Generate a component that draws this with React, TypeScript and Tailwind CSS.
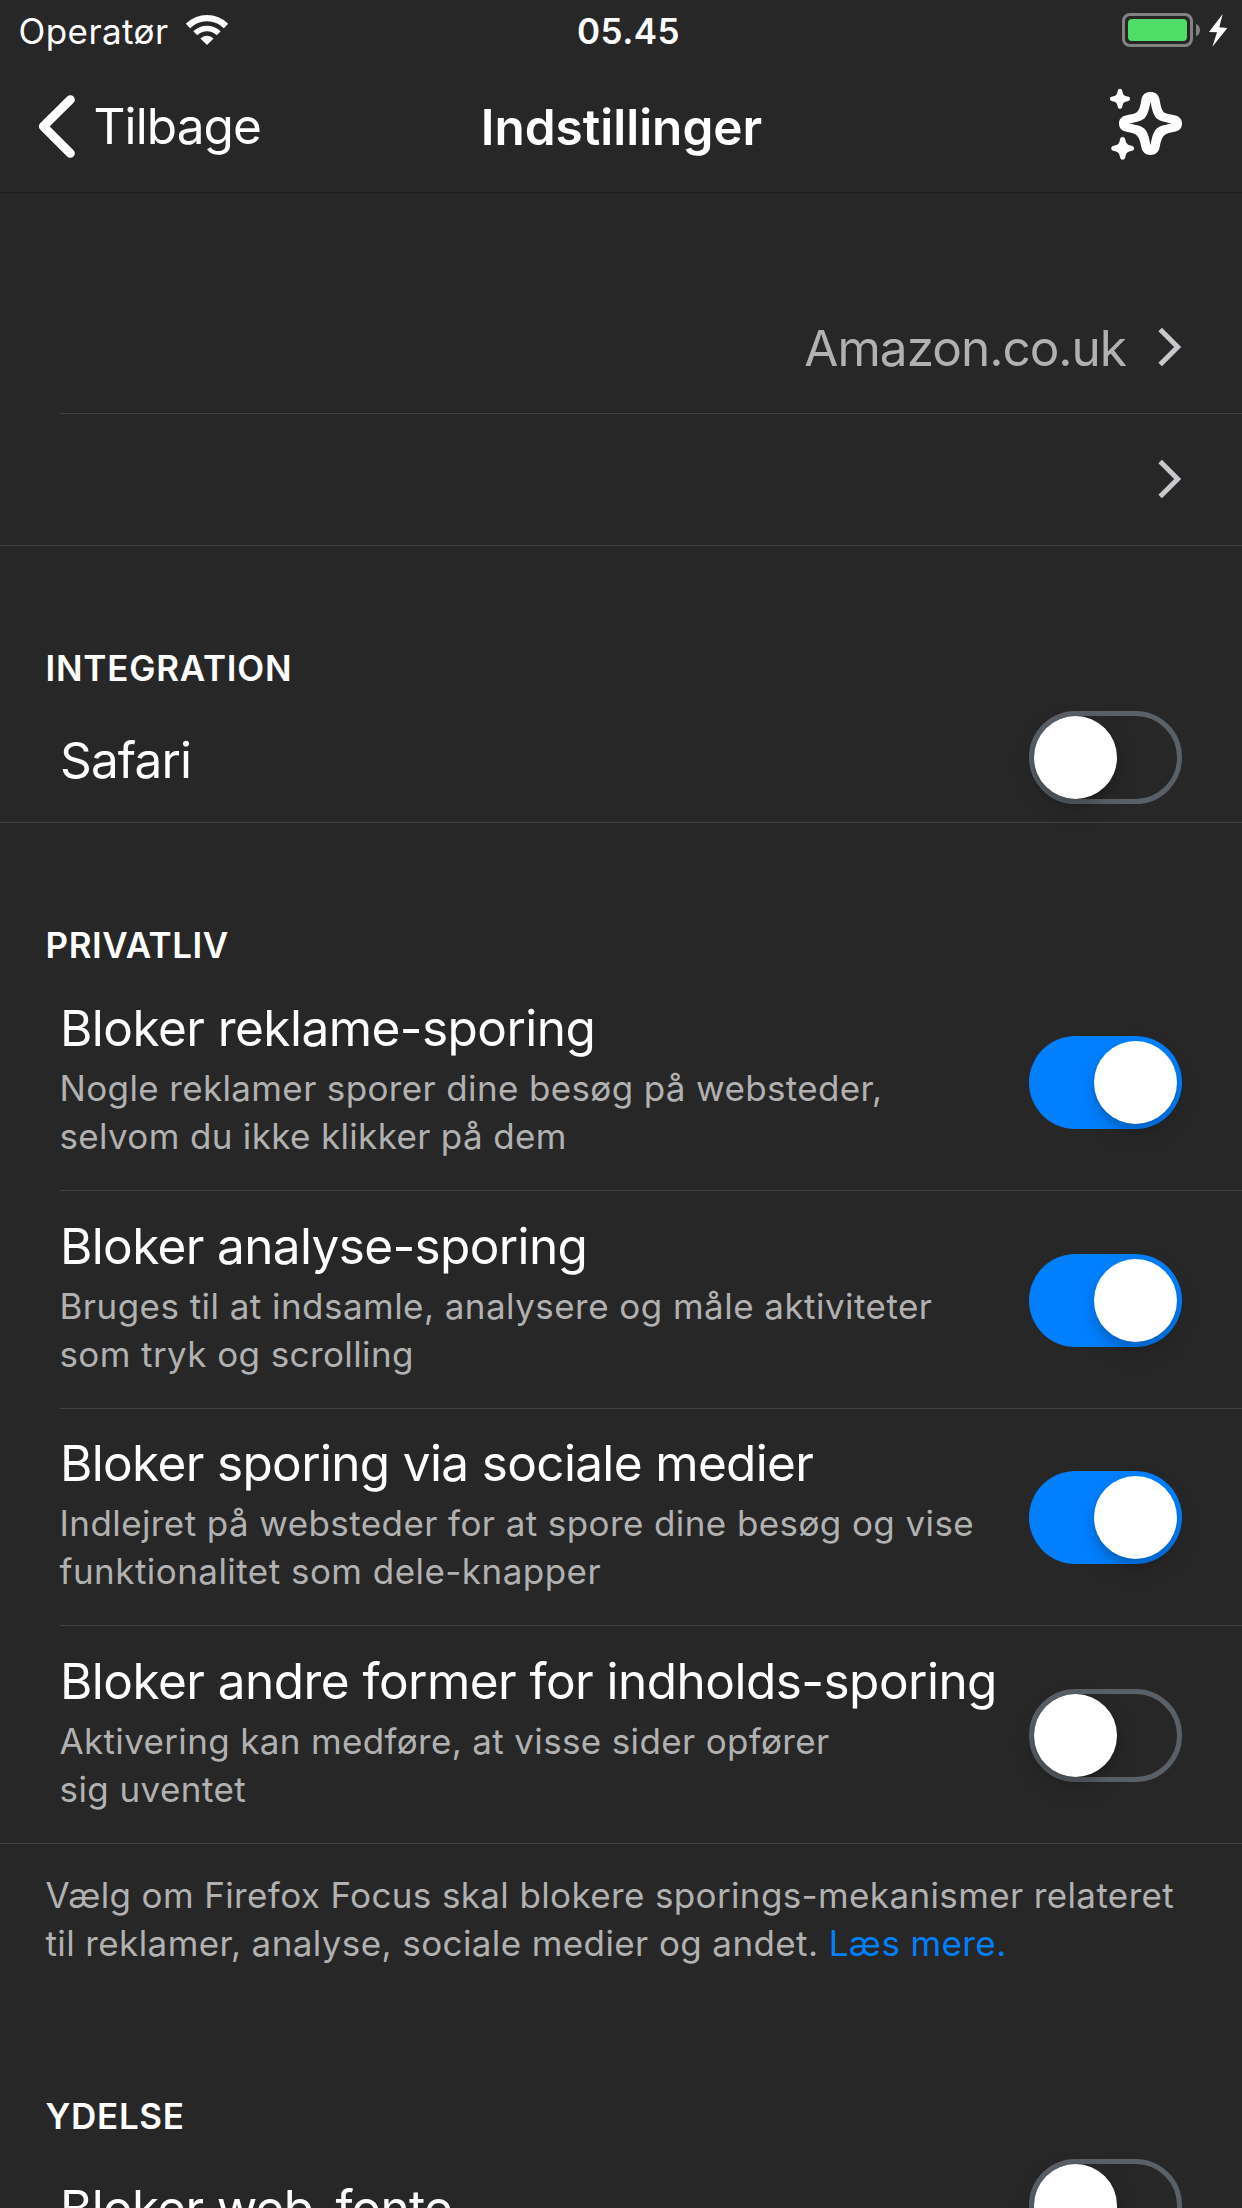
import type { ReactNode } from "react";

function WifiIcon() {
  return (
    <svg className="mt-[14px] ml-[16.5px] h-[32px] w-[44px]" viewBox="555 42 132 96" fill="#fff">
      <path d="M557.4 71.4A90 90 0 0 1 684.6 71.4L671.6 84.4A71.6 71.6 0 0 0 570.4 84.4Z" />
      <path d="M580 94A58 58 0 0 1 662 94L650 106A41 41 0 0 0 592 106Z" />
      <path d="M601.2 115.2A28 28 0 0 1 640.8 115.2L621 135Z" />
    </svg>
  );
}

function Battery() {
  return (
    <div className="mt-[13px] mr-[14px] flex">
      <div className="h-[34px] w-[71px] rounded-[8px] border-[3px] border-[#828282] p-[3px]">
        <div className="h-[22px] w-[59px] rounded-[4px] bg-[#4fdc67]" />
      </div>
      <svg className="ml-[3px] h-[34px] w-[32px]" viewBox="0 0 96 102">
        <path d="M0 32Q12 38 12 51Q12 64 0 70Z" fill="#828282" />
        <path d="M80 3L39 57L63 58L49 101L94 45L70 43Z" fill="#fff" />
      </svg>
    </div>
  );
}

const SMALL_STAR =
  "M0-30C4-30 6-28 7-23C9-12 12-9 23-7C28-6 30-4 30 0C30 4 28 6 23 7C12 9 9 12 7 23C6 28 4 30 0 30C-4 30-6 28-7 23C-9 12-12 9-23 7C-28 6-30 4-30 0C-30-4-28-6-23-7C-12-9-9-12-7-23C-6-28-4-30 0-30Z";

function SparkleIcon() {
  return (
    <svg className="mt-[36px] mr-[59px] h-[74px] w-[74px]" viewBox="81 264 222 222" fill="#fff">
      <path
        fillRule="evenodd"
        transform="translate(205.5 370.5)"
        d="M0-94.5C14-94.5 24-87 27-73C31-50 34-40 41-33C47-29 56-28 72-25C87-22 94.5-13 94.5 0C94.5 13 87 22 72 25C56 28 47 30 41 36C34 43 31 52 27 73C24 87 14 94.5 0 94.5C-14 94.5-24 87-27 73C-31 52-34 43-41 36C-47 30-56 28-72 25C-87 22-94.5 13-94.5 0C-94.5-13-87-22-72-25C-56-28-47-30-41-34C-34-41-31-50-27-73C-24-87-14-94.5 0-94.5Z
           M0-65C-5-39-8-28-16-18C-25-8-38-5-64 0C-38 5-25 8-16 18C-8 28-5 39 0 65C5 39 8 28 16 18C25 8 38 5 64 0C38-5 25-8 16-18C8-28 5-39 0-65Z"
      />
      <path transform="translate(114 296.500)" d={SMALL_STAR} />
      <path transform="translate(122 445) scale(1.140)" d={SMALL_STAR} />
    </svg>
  );
}

function Disclosure() {
  return (
    <svg className="mr-[60px] h-[40px] w-[24px] shrink-0" viewBox="0 0 72 120" fill="none">
      <path d="M6.500 7.500L59 60L6.500 112.500" stroke="#c7c7cc" strokeWidth="15" />
    </svg>
  );
}

function Toggle({ on }: { on?: boolean }) {
  return (
    <div
      className={
        "flex h-[93px] w-[153px] shrink-0 rounded-full " +
        (on ? "justify-end bg-[#0080ff] p-[5px]" : "border-[5px] border-[#5a6068]")
      }
    >
      <div className="size-[83px] rounded-full bg-white shadow-[0_9px_24px_rgba(0,0,0,0.15),0_6px_6px_rgba(0,0,0,0.12)]" />
    </div>
  );
}

function Heading({ className, children }: { className: string; children: ReactNode }) {
  return (
    <h2 className={"pl-[45.5px] text-[35px] leading-[42px] font-semibold whitespace-nowrap " + className}>
      {children}
    </h2>
  );
}

const TRACKERS = [
  {
    title: "Bloker reklame-sporing",
    titleClass: "tracking-[-0.543px]",
    rowClass: "ml-[60px] h-[218px] pt-[25px]",
    lines: [
      { text: "Nogle reklamer sporer dine besøg på websteder,", cls: "tracking-[0.360px]" },
      { text: "selvom du ikke klikker på dem", cls: "tracking-[0.340px]" },
    ],
    on: true,
  },
  {
    title: "Bloker analyse-sporing",
    titleClass: "tracking-[-0.640px]",
    rowClass: "ml-[60px] h-[218px] pt-[25px]",
    lines: [
      { text: "Bruges til at indsamle, analysere og måle aktiviteter", cls: "tracking-[0.455px]" },
      { text: "som tryk og scrolling", cls: "tracking-[0.400px]" },
    ],
    on: true,
  },
  {
    title: "Bloker sporing via sociale medier",
    titleClass: "tracking-[-0.650px]",
    rowClass: "ml-[60px] h-[217px] pt-[24px]",
    lines: [
      { text: "Indlejret på websteder for at spore dine besøg og vise", cls: "tracking-[0.410px]" },
      { text: "funktionalitet som dele-knapper", cls: "tracking-[0.460px]" },
    ],
    on: true,
  },
  {
    title: "Bloker andre former for indholds-sporing",
    titleClass: "tracking-[-0.530px]",
    rowClass: "h-[218px] pt-[25px] pl-[60px]",
    lines: [
      { text: "Aktivering kan medføre, at visse sider opfører", cls: "tracking-[0.345px]" },
      { text: "sig uventet", cls: "tracking-[0.420px]" },
    ],
    on: false,
  },
];

export default function App() {
  return (
    <div className="h-[2208px] w-[1242px] overflow-hidden bg-[#272727] font-['Inter',sans-serif] text-white">
      <header className="h-[193px] border-b border-[#1b1b1b]">
        <div className="grid h-[52px] grid-cols-[1fr_auto_1fr] text-[35px] leading-[42px] whitespace-nowrap">
          <div className="flex pl-[18.5px]">
            <span className="mt-[10px] tracking-[0.430px]">Operatør</span>
            <WifiIcon />
          </div>
          <span className="mt-[10px] ml-[15px] font-semibold tracking-[0.444px]">05.45</span>
          <div className="flex justify-end">
            <Battery />
          </div>
        </div>
        <div className="grid h-[140px] grid-cols-[1fr_auto_1fr] text-[49.5px] leading-[60px] whitespace-nowrap">
          <div className="flex">
            <svg className="mt-[42px] ml-[38px] h-[66px] w-[38px]" viewBox="114 282 114 198" fill="none">
              <path
                d="M211 299L130 379L211 460"
                stroke="#fff"
                strokeWidth="27"
                strokeLinecap="round"
                strokeLinejoin="round"
              />
            </svg>
            <span className="mt-[44px] ml-[17.5px] tracking-[-0.896px]">Tilbage</span>
          </div>
          <h1 className="mt-[45px] ml-[1px] font-semibold">Indstillinger</h1>
          <div className="flex justify-end">
            <SparkleIcon />
          </div>
        </div>
      </header>

      <div className="mt-[88px] ml-[60px] flex h-[133px] items-center justify-end border-b border-[#414141]">
        <span className="mr-[32px] pt-px text-[49.5px] leading-[60px] tracking-[-1.009px] text-[#b1b1b1]">
          Amazon.co.uk
        </span>
        <Disclosure />
      </div>
      <div className="flex h-[132px] items-center justify-end border-b border-[#414141] pb-[2px]">
        <Disclosure />
      </div>

      <Heading className="mt-[101px] tracking-[0.770px]">INTEGRATION</Heading>
      <div className="flex h-[134px] justify-between border-b border-[#424247] pt-[22px] pr-[60px] pl-[60px]">
        <span className="pt-[19px] text-[49.5px] leading-[60px] tracking-[-0.850px]">Safari</span>
        <Toggle />
      </div>

      <Heading className="mt-[101px] mb-[7px] tracking-[0.550px]">PRIVATLIV</Heading>
      {TRACKERS.map((row) => (
        <div
          key={row.title}
          className={"flex justify-between border-b border-[#414141] pr-[60px] whitespace-nowrap " + row.rowClass}
        >
          <div>
            <div className={"text-[49.5px] leading-[60px] " + row.titleClass}>{row.title}</div>
            <div className="mt-[6px] -ml-[0.5px] text-[35px] leading-[48px] text-[#b1b1b1]">
              {row.lines.map((line) => (
                <div key={line.text} className={line.cls}>
                  {line.text}
                </div>
              ))}
            </div>
          </div>
          <div className="-ml-10 pt-[38px]">
            <Toggle on={row.on} />
          </div>
        </div>
      ))}

      <p className="mt-[27px] pl-[45.5px] text-[35px] leading-[48px] whitespace-nowrap text-[#b1b1b1]">
        <span className="block tracking-[0.370px]">
          Vælg om Firefox Focus skal blokere sporings-mekanismer relateret
        </span>
        <span className="block tracking-[0.395px]">
          til reklamer, analyse, sociale medier og andet. <a className="text-[#0080ff]">Læs mere.</a>
        </span>
      </p>

      <Heading className="mt-[128px] tracking-[0.650px]">YDELSE</Heading>
      <div className="flex h-[134px] justify-between pt-[22px] pr-[60px] pl-[60px]">
        <span className="pt-[19px] text-[49.5px] leading-[60px] tracking-[-0.700px] whitespace-nowrap">
          Bloker web-fonte
        </span>
        <Toggle />
      </div>
    </div>
  );
}
